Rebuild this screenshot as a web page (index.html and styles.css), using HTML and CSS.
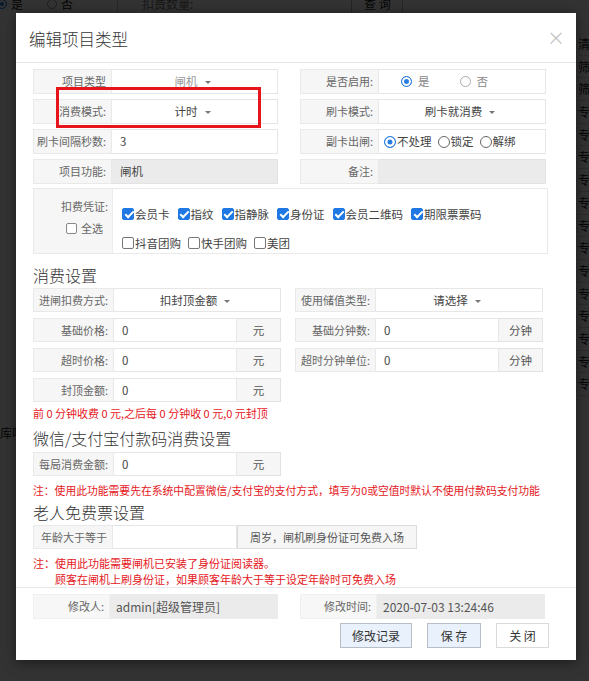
FILE: index.html
```html
<!DOCTYPE html>
<html lang="zh-CN">
<head>
<meta charset="utf-8">
<title>编辑项目类型</title>
<link rel="stylesheet" href="styles.css">
</head>
<body>
<div class="page">
  <div class="page-top">
    <span class="bg-radio on"></span><span class="bg-t">是</span>
    <span class="bg-radio"></span><span class="bg-t">否</span>
    <span class="bg-sep"></span>
    <span class="bg-t bg-label">扣费数量:</span>
    <span class="bg-input"></span>
    <span class="bg-btn">查 询</span>
  </div>
  <div class="page-main">
    <div class="page-left"><span class="bg-t">库吗</span></div>
    <ul class="page-right">
      <li>清</li><li>筛选</li><li>筛选</li><li>专卡</li><li>专卡</li><li>专卡</li><li>专卡</li><li>专卡</li><li>专卡</li><li>专卡</li><li>专卡</li><li>专卡</li><li>专卡</li><li>专卡</li><li>专卡</li><li>专卡</li>
    </ul>
  </div>
</div>
<div class="mask"></div>

<div class="modal">
  <div class="modal-head">
    <h1 class="modal-title">编辑项目类型</h1>
    <span class="close">×</span>
  </div>
  <div class="modal-body">
    <div class="grid-top">
      <div class="field"><label class="lbl">项目类型</label><div class="val select muted">闸机<i class="caret"></i></div></div>
      <div class="field"><label class="lbl">是否启用:</label>
        <div class="val radios">
          <span class="opt soft"><span class="radio on"></span>是</span>
          <span class="opt soft"><span class="radio"></span>否</span>
        </div>
      </div>
      <div class="field"><label class="lbl">消费模式:</label><div class="val select">计时<i class="caret"></i></div></div>
      <div class="field"><label class="lbl">刷卡模式:</label><div class="val select">刷卡就消费<i class="caret"></i></div></div>
      <div class="field"><label class="lbl">刷卡间隔秒数:</label><div class="val">3</div></div>
      <div class="field"><label class="lbl">副卡出闸:</label>
        <div class="val radios tight">
          <span class="opt"><span class="radio big on"></span>不处理</span>
          <span class="opt"><span class="radio big"></span>锁定</span>
          <span class="opt"><span class="radio big"></span>解绑</span>
        </div>
      </div>
      <div class="field"><label class="lbl">项目功能:</label><div class="val disabled">闸机</div></div>
      <div class="field"><label class="lbl">备注:</label><div class="val disabled"></div></div>
    </div>

    <div class="checks">
      <div class="checks-lbl">
        <div class="checks-lbl-in">
          <div>扣费凭证:</div>
          <div class="all"><span class="cb"></span> 全选</div>
        </div>
      </div>
      <div class="checks-body">
        <div class="cb-row">
          <span class="cb-item"><span class="cb on"></span>会员卡</span>
          <span class="cb-item"><span class="cb on"></span>指纹</span>
          <span class="cb-item"><span class="cb on"></span>指静脉</span>
          <span class="cb-item"><span class="cb on"></span>身份证</span>
          <span class="cb-item"><span class="cb on"></span>会员二维码</span>
          <span class="cb-item"><span class="cb on"></span>期限票票码</span>
        </div>
        <div class="cb-row row2">
          <span class="cb-item"><span class="cb"></span>抖音团购</span>
          <span class="cb-item"><span class="cb"></span>快手团购</span>
          <span class="cb-item"><span class="cb"></span>美团</span>
        </div>
      </div>
    </div>

    <h2 class="sec h-fee">消费设置</h2>
    <div class="grid-fee">
      <div class="field f24"><label class="lbl w81">进闸扣费方式:</label><div class="val select">扣封顶金额<i class="caret"></i></div></div>
      <div class="field f24"><label class="lbl w81">使用储值类型:</label><div class="val select">请选择<i class="caret"></i></div></div>
      <div class="field f24"><label class="lbl w81">基础价格:</label><div class="val">0</div><span class="unit">元</span></div>
      <div class="field f24"><label class="lbl w81">基础分钟数:</label><div class="val">0</div><span class="unit">分钟</span></div>
      <div class="field f24"><label class="lbl w81">超时价格:</label><div class="val">0</div><span class="unit">元</span></div>
      <div class="field f24"><label class="lbl w81">超时分钟单位:</label><div class="val">0</div><span class="unit">分钟</span></div>
      <div class="field f24"><label class="lbl w81">封顶金额:</label><div class="val">0</div><span class="unit">元</span></div>
    </div>
    <p class="note n-fee">前 0 分钟收费 0 元,之后每 0 分钟收 0 元,0 元封顶</p>

    <h2 class="sec h-pay">微信/支付宝付款码消费设置</h2>
    <div class="field f24 w248"><label class="lbl w81">每局消费金额:</label><div class="val">0</div><span class="unit">元</span></div>
    <p class="note n-pay">注：使用此功能需要先在系统中配置微信/支付宝的支付方式，填写为0或空值时默认不使用付款码支付功能</p>

    <h2 class="sec h-old">老人免费票设置</h2>
    <div class="field f24 age"><label class="lbl w80">年龄大于等于</label><div class="val age-in"></div><span class="unit wide">周岁，闸机刷身份证可免费入场</span></div>
    <div class="note n-old">
      <p class="nl">注：使用此功能需要闸机已安装了身份证阅读器。</p>
      <p class="nl indent">顾客在闸机上刷身份证，如果顾客年龄大于等于设定年龄时可免费入场</p>
    </div>
  </div>

  <div class="modal-foot">
    <div class="grid-foot">
      <div class="field plain"><label class="lbl w77">修改人:</label><div class="val disabled big-t">admin[超级管理员]</div></div>
      <div class="field plain"><label class="lbl w77">修改时间:</label><div class="val disabled big-t">2020-07-03 13:24:46</div></div>
    </div>
    <div class="btns">
      <button class="btn blue w72">修改记录</button>
      <button class="btn blue w54">保 存</button>
      <button class="btn w53">关 闭</button>
    </div>
  </div>
</div>

<div class="mark"></div>
</body>
</html>
```

FILE: styles.css
```css
html, body {
  margin: 0;
  padding: 0;
  width: 589px;
  height: 681px;
  overflow: hidden;
}
body {
  position: relative;
  background: #fff;
  font-family: "Noto Sans CJK SC", "Noto Sans", sans-serif;
  font-size: 12px;
  color: #333;
}

/* ---------- background page (dimmed) ---------- */
.page {
  width: 589px;
  height: 681px;
  color: #222;
}
.page-top {
  display: flex;
  align-items: center;
  height: 18px;
  margin-top: -5px;
  font-size: 12px;
  line-height: 18px;
}
.bg-radio {
  width: 10px;
  height: 10px;
  border-radius: 50%;
  border: 1px solid #999;
  box-sizing: border-box;
  margin: 0 4px 0 0;
}
.bg-radio.on {
  border-color: #1e7be6;
  background: #1e7be6;
  box-shadow: inset 0 0 0 2px #fff;
  margin-left: -3px;
}
.bg-t + .bg-radio { margin-left: 24px; }
.bg-sep {
  width: 1px;
  height: 18px;
  background: #ccc;
  margin-left: 44px;
}
.bg-label { margin-left: 24px; color: #777; }
.bg-input {
  width: 150px;
  height: 16px;
}
.bg-btn {
  width: 50px;
  height: 20px;
  border: 1px solid #bbb;
  text-align: center;
  line-height: 20px;
  margin-left: 8px;
}
.page-main {
  display: flex;
}
.page-left {
  width: 578px;
  flex: none;
  padding-top: 411px;
}
.page-right {
  list-style: none;
  margin: 0;
  padding: 20px 0 0 0;
  white-space: nowrap;
}
.page-right li {
  height: 22.7px;
  line-height: 22.7px;
  border-bottom: 1px solid #ddd;
  box-sizing: border-box;
}
.mask {
  position: absolute;
  inset: 0;
  background: rgba(0, 0, 0, 0.8);
}

/* ---------- modal ---------- */
.modal {
  position: absolute;
  left: 16px;
  top: 13px;
  width: 560px;
  height: 647px;
  background: #fff;
  box-shadow: 0 2px 12px rgba(0, 0, 0, 0.5);
  display: flex;
  flex-direction: column;
}
.modal-head {
  height: 49px;
  border-bottom: 1px solid #e8e8e8;
  display: flex;
  align-items: center;
  justify-content: space-between;
  padding: 0 11px 0 13px;
  flex: none;
}
.modal-title {
  margin: 0;
  font-size: 16.5px;
  font-weight: 300;
  color: #333;
  line-height: 22px;
  padding-top: 3px;
}
.close {
  font-size: 18px;
  color: #c4c4c4;
  line-height: 18px;
  margin-top: -2px;
}
.modal-body {
  flex: 1;
  padding: 6px 28px 0 17px;
}

/* ---------- fields ---------- */
.field {
  display: flex;
  height: 25px;
  box-sizing: border-box;
}
.field.f24 { height: 24px; }
.lbl {
  width: 79px;
  flex: none;
  box-sizing: border-box;
  background: #f6f6f6;
  border: 1px solid #e9e9e9;
  text-align: right;
  padding-right: 5px;
  color: #666;
  font-size: 11px;
  line-height: 23px;
  white-space: nowrap;
  overflow: hidden;
}
.f24 .lbl { line-height: 22px; }
.lbl.w81 { width: 81px; }
.lbl.w80 { width: 80px; }
.lbl.w77 { width: 77px; }
.val {
  flex: 1;
  min-width: 0;
  box-sizing: border-box;
  border: 1px solid #e6e6e6;
  border-left: 0;
  padding-left: 8px;
  line-height: 23px;
  color: #444;
  font-size: 11.5px;
  white-space: nowrap;
}
.f24 .val { line-height: 22px; }
.val.disabled {
  background: #ebebeb;
  border-color: #e3e3e3;
}
.val.select {
  display: flex;
  justify-content: center;
  align-items: center;
  padding-left: 0;
  padding-right: 4px;
  color: #444;
}
.val.select.muted { color: #999; }
.caret {
  width: 0;
  height: 0;
  border-left: 3px solid transparent;
  border-right: 3px solid transparent;
  border-top: 3px solid #777;
  margin-left: 7px;
  margin-top: 2px;
}
.unit {
  width: 44px;
  flex: none;
  box-sizing: border-box;
  background: #f6f6f6;
  border: 1px solid #e2e2e2;
  border-left: 0;
  text-align: center;
  color: #555;
  font-size: 11.5px;
  line-height: 22px;
}
.unit.wide {
  width: 180px;
  text-align: center;
  padding: 0 6px;
  border: 1px solid #dcdcdc;
  white-space: nowrap;
  font-size: 11px;
}

/* radios */
.radios {
  display: flex;
  align-items: center;
  padding-left: 22px;
}
.radios.tight { padding-left: 5px; }
.opt {
  display: flex;
  align-items: center;
  color: #444;
  margin-right: 19px;
}
.opt.soft { color: #888; margin-right: 30px; }
.radios.tight .opt { margin-right: 6px; }
.radio {
  width: 11px;
  height: 11px;
  border-radius: 50%;
  border: 1px solid #aaa;
  box-sizing: border-box;
  margin-right: 6px;
  background: #fff;
}
.radio.big {
  width: 12px;
  height: 12px;
  margin-right: 1px;
  border-color: #666;
}
.radio.on {
  border-color: #2a7de1;
  background: #2a7de1;
  box-shadow: inset 0 0 0 2px #fff;
}
.radio.big.on {
  box-shadow: inset 0 0 0 2.5px #fff;
}

/* top grid */
.grid-top {
  display: grid;
  grid-template-columns: 245px 246px;
  column-gap: 22px;
  row-gap: 5px;
}

/* checks */
.checks {
  display: flex;
  margin-top: 4px;
  width: 515px;
  height: 66px;
  box-sizing: border-box;
  border: 1px solid #e9e9e9;
}
.checks-lbl {
  width: 79px;
  flex: none;
  background: #f6f6f6;
  border-right: 1px solid #ececec;
  display: flex;
  justify-content: flex-end;
  padding-right: 4px;
  box-sizing: border-box;
}
.checks-lbl-in {
  text-align: center;
  color: #666;
  font-size: 11px;
  line-height: 22px;
  padding-top: 6px;
}
.all {
  display: flex;
  align-items: center;
  justify-content: center;
}
.all .cb {
  width: 11px;
  height: 11px;
  margin-right: 4px;
  border-color: #888;
}
.checks-body {
  padding: 10px 0 0 9px;
}
.cb-row {
  display: flex;
  align-items: center;
  height: 29px;
}
.cb-item {
  display: flex;
  align-items: center;
  margin-right: 8px;
  color: #444;
  font-size: 11.5px;
  line-height: 16px;
}
.row2 .cb-item { margin-right: 7px; }
.cb {
  position: relative;
  width: 12px;
  height: 12px;
  box-sizing: border-box;
  border: 1px solid #777;
  border-radius: 2px;
  background: #fff;
  margin-right: 1px;
  flex: none;
}
.cb.on {
  background: #1f78e3;
  border-color: #1f78e3;
}
.cb.on::after {
  content: "";
  position: absolute;
  left: 3.5px;
  top: 0.5px;
  width: 3px;
  height: 7px;
  border: solid #fff;
  border-width: 0 2px 2px 0;
  transform: rotate(45deg);
}

/* sections */
.sec {
  margin: 0;
  font-size: 16px;
  font-weight: 300;
  color: #333;
  line-height: 22px;
}
.h-fee { margin: 10px 0 2px; }
.h-pay { margin: 6px 0 3px; }
.h-old { margin: 3px 0 2px; }
.grid-fee {
  display: grid;
  grid-template-columns: 248px 248px;
  column-gap: 14px;
  row-gap: 6px;
}
.note {
  margin: 0;
  color: #e5171c;
  font-size: 11px;
  line-height: 16px;
  white-space: nowrap;
}
.n-pay { font-size: 10.8px; }
.n-fee { margin-top: 3px; }
.n-pay { margin-top: 6px; }
.n-old { margin-top: 6px; }
.nl {
  margin: 0;
  height: 16px;
  line-height: 16px;
}
.indent { padding-left: 22px; }
.w248 { width: 248px; }
.age .age-in { flex: none; width: 124px; }

/* footer */
.modal-foot {
  flex: none;
  border-top: 1px solid #e8e8e8;
  padding: 6px 27px 12px 17px;
}
.grid-foot {
  display: grid;
  grid-template-columns: 245px 245px;
  column-gap: 22px;
}
.field.plain .lbl {
  background: #f7f7f7;
  border-color: #f0f0f0;
}
.field.plain .val {
  border-color: #ebebeb;
  color: #555;
  font-size: 12px;
  padding-left: 6px;
}
.btns {
  display: flex;
  justify-content: flex-end;
  gap: 15px;
  margin-top: 4px;
}
.btn {
  height: 25px;
  box-sizing: border-box;
  border: 1px solid #c9c9c9;
  background: #fff;
  font-family: "Noto Sans CJK SC", sans-serif;
  font-size: 12px;
  color: #333;
  padding: 0;
  line-height: 22px;
}
.btn.blue {
  background: #e9f1fc;
  border-color: #b8bec8;
}
.w72 { width: 72px; }
.w54 { width: 54px; }
.w53 { width: 53px; border-color: #dadada; }

/* red annotation */
.mark {
  position: absolute;
  left: 56px;
  top: 87px;
  width: 205px;
  height: 41px;
  box-sizing: border-box;
  border: 3px solid #e8141b;
}
```
